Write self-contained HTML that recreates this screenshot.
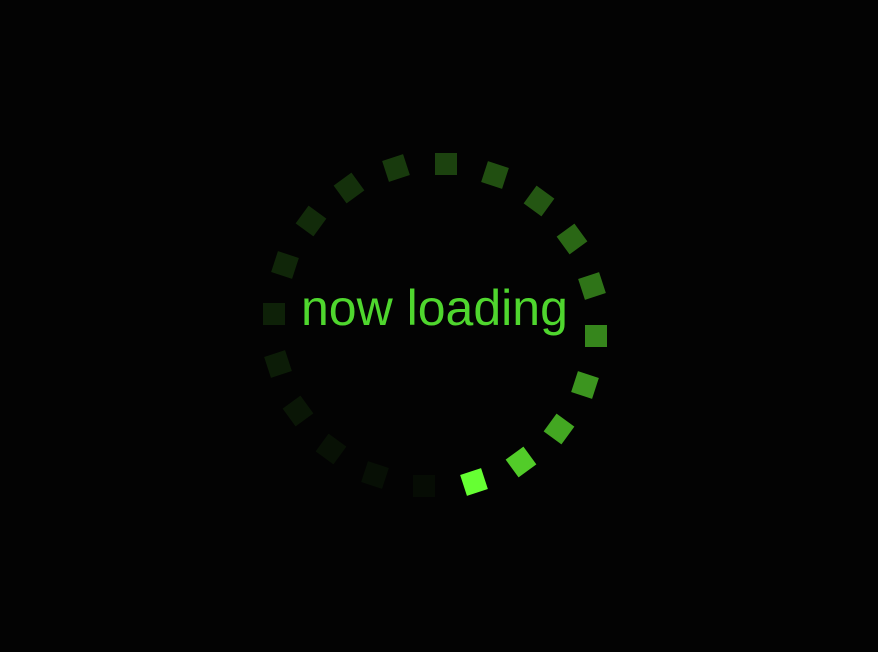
<!DOCTYPE html>
<html><head><style>
html,body{margin:0;padding:0;background:#030303;width:878px;height:652px;overflow:hidden}
.s{position:absolute;width:22px;height:22px;background:#66ff33}
.t{position:absolute;left:301px;top:279px;font:50px "Liberation Sans",sans-serif;color:#4fd62e;white-space:nowrap;line-height:58px}
</style></head><body>
<div id="c"></div>
<div class="t">now loading</div>
<script>
var op=[0.25,0.3,0.33,0.4,0.45,0.52,0.58,0.65,0.8,1,0.04,0.05,0.06,0.08,0.1,0.12,0.14,0.16,0.18,0.22];
var h='';
for(var i=0;i<20;i++){var a=(3.9+18*i)*Math.PI/180;var x=435+161.5*Math.sin(a),y=325-161.5*Math.cos(a);
h+='<div class="s" style="left:'+(x-11).toFixed(1)+'px;top:'+(y-11).toFixed(1)+'px;opacity:'+op[i]+';transform:rotate('+(18*i)+'deg)"></div>';}
document.getElementById('c').innerHTML=h;
</script>
</body></html>
